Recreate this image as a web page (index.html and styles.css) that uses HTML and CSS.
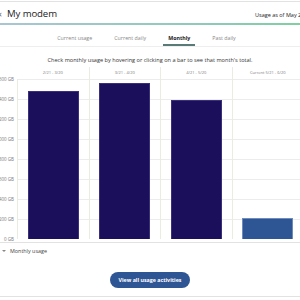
FILE: index.html
```html
<!DOCTYPE html>
<html lang="en">
  <head>
    <meta charset="UTF-8" />
    <meta name="viewport" content="width=device-width, initial-scale=1.0" />
    <title>My modem</title>
    <link rel="stylesheet" href="styles.css">
  </head>
  <body>
    <div class="page">
      <header class="top">
        <h1 class="title"><span class="back">&lsaquo;</span>My modem</h1>
        <span class="as-of">Usage as of May 21</span>
      </header>

      <nav class="tabs">
        <span class="tab">Current usage</span>
        <span class="tab">Current daily</span>
        <span class="tab active">Monthly</span>
        <span class="tab">Past daily</span>
      </nav>

      <p class="hint">Check monthly usage by hovering or clicking on a bar to see that month's total.</p>

      <div class="chart">
        <div class="y-axis">
          <span>1600 GB</span>
          <span>1400 GB</span>
          <span>1200 GB</span>
          <span>1000 GB</span>
          <span>800 GB</span>
          <span>600 GB</span>
          <span>400 GB</span>
          <span>200 GB</span>
          <span>0 GB</span>
        </div>
        <div class="column">
          <div class="col-label">2/21 - 3/20</div>
          <div class="plot"><div class="bar" style="height: 148px"></div></div>
        </div>
        <div class="column">
          <div class="col-label">3/21 - 4/20</div>
          <div class="plot"><div class="bar" style="height: 156px"></div></div>
        </div>
        <div class="column">
          <div class="col-label">4/21 - 5/20</div>
          <div class="plot"><div class="bar" style="height: 139px"></div></div>
        </div>
        <div class="column">
          <div class="col-label">Current 5/21 - 6/20</div>
          <div class="plot"><div class="bar current" style="height: 21px"></div></div>
        </div>
      </div>

      <div class="legend"><span class="caret"></span>Monthly usage</div>

      <div class="actions">
        <button class="pill">View all usage activities</button>
      </div>
    </div>
  </body>
</html>
```

FILE: styles.css
```css
* {
  margin: 0;
  padding: 0;
  box-sizing: border-box;
}

:root {
  --grid: #ececec;
  --grid-v: #ebebe2;
  --text-muted: #7a7a7a;
  --navy: #1b0f5c;
  --blue: #2f5694;
}

html, body {
  overflow: hidden;
}

body {
  font-family: 'Open Sans', 'Liberation Sans', sans-serif;
  color: #222;
  background: #fff;
  width: 300px;
  height: 300px;
}

.page {
  width: 306px;
  margin-top: 1px;
  border-top: 1px solid #e2e2e2;
}

/* header with the gradient rule under it */
.top {
  height: 23px;
  display: flex;
  align-items: center;
  justify-content: space-between;
  padding-left: 7px;
  border-bottom: 2px solid;
  border-image: linear-gradient(to right, #a9c6d3, #8ccab8 70%, #7fcf9f) 1;
}

.title {
  font-size: 9.6px;
  font-weight: 400;
  position: relative;
  margin-top: 2px;
  letter-spacing: -0.1px;
}

.back {
  position: absolute;
  left: -8px;
  color: #555;
}

.as-of {
  font-size: 5.5px;
  margin-top: 5px;
  white-space: nowrap;
  width: 51px;
  overflow: hidden;
}

.tabs {
  height: 22px;
  display: flex;
  justify-content: center;
  align-items: flex-end;
  gap: 12px;
  padding-right: 13px;
  border-bottom: 1px solid #eee;
}

.tab {
  font-size: 5.3px;
  line-height: 8px;
  color: #888;
  padding: 0 5px 2px;
  border-bottom: 2px solid transparent;
}

.tab.active {
  color: #222;
  font-weight: 700;
  border-bottom-color: #5a7a78;
}

.hint {
  font-size: 5.6px;
  line-height: 8px;
  text-align: center;
  color: #333;
  margin-top: 9px;
  padding-right: 6px;
}

/* chart: one axis column and four month columns */
.chart {
  display: grid;
  grid-template-columns: 17px repeat(4, 71.5px);
  margin-top: 3px;
  border-bottom: 1px solid #e2e2e2;
  padding-bottom: 3px;
}

.y-axis {
  display: flex;
  flex-direction: column;
  justify-content: space-between;
  align-items: flex-end;
  overflow: hidden;
  padding: 9px 3px 0 0;
  margin-bottom: -3px;
  font-size: 4.5px;
  line-height: 6px;
  color: var(--text-muted);
  white-space: nowrap;
}

.column {
  border-left: 1px solid var(--grid-v);
  display: flex;
  flex-direction: column;
}

.y-axis + .column {
  border-left: none;
}

.col-label {
  height: 12px;
  font-size: 4px;
  color: var(--text-muted);
  text-align: center;
  line-height: 12px;
  white-space: nowrap;
}

.plot {
  height: 160px;
  display: flex;
  align-items: flex-end;
  justify-content: center;
  background: repeating-linear-gradient(to bottom, var(--grid) 0 1px, transparent 1px 20px);
}

.y-axis + .column .plot {
  border-left: 1px solid var(--grid-v);
}

.bar {
  width: 51px;
  background: var(--navy);
  border: 1px solid #3a2f7a;
  border-bottom: none;
}

.bar.current {
  background: var(--blue);
  border-color: #6d8bbb;
}

.legend {
  font-size: 5.4px;
  line-height: 8px;
  color: #444;
  display: flex;
  align-items: center;
  gap: 4px;
  padding: 4px 0 0 2px;
}

.caret {
  width: 0;
  height: 0;
  border-left: 2px solid transparent;
  border-right: 2px solid transparent;
  border-top: 2px solid #888;
}

.actions {
  display: flex;
  justify-content: center;
  padding: 17px 0 8px;
  border-bottom: 1px solid #e2e2e2;
  margin-right: 6px;
}

.pill {
  all: unset;
  width: 80px;
  height: 16px;
  border-radius: 8px;
  background: var(--blue);
  color: #fff;
  font-size: 5.3px;
  font-weight: 700;
  text-align: center;
  line-height: 16px;
  cursor: pointer;
}
```
